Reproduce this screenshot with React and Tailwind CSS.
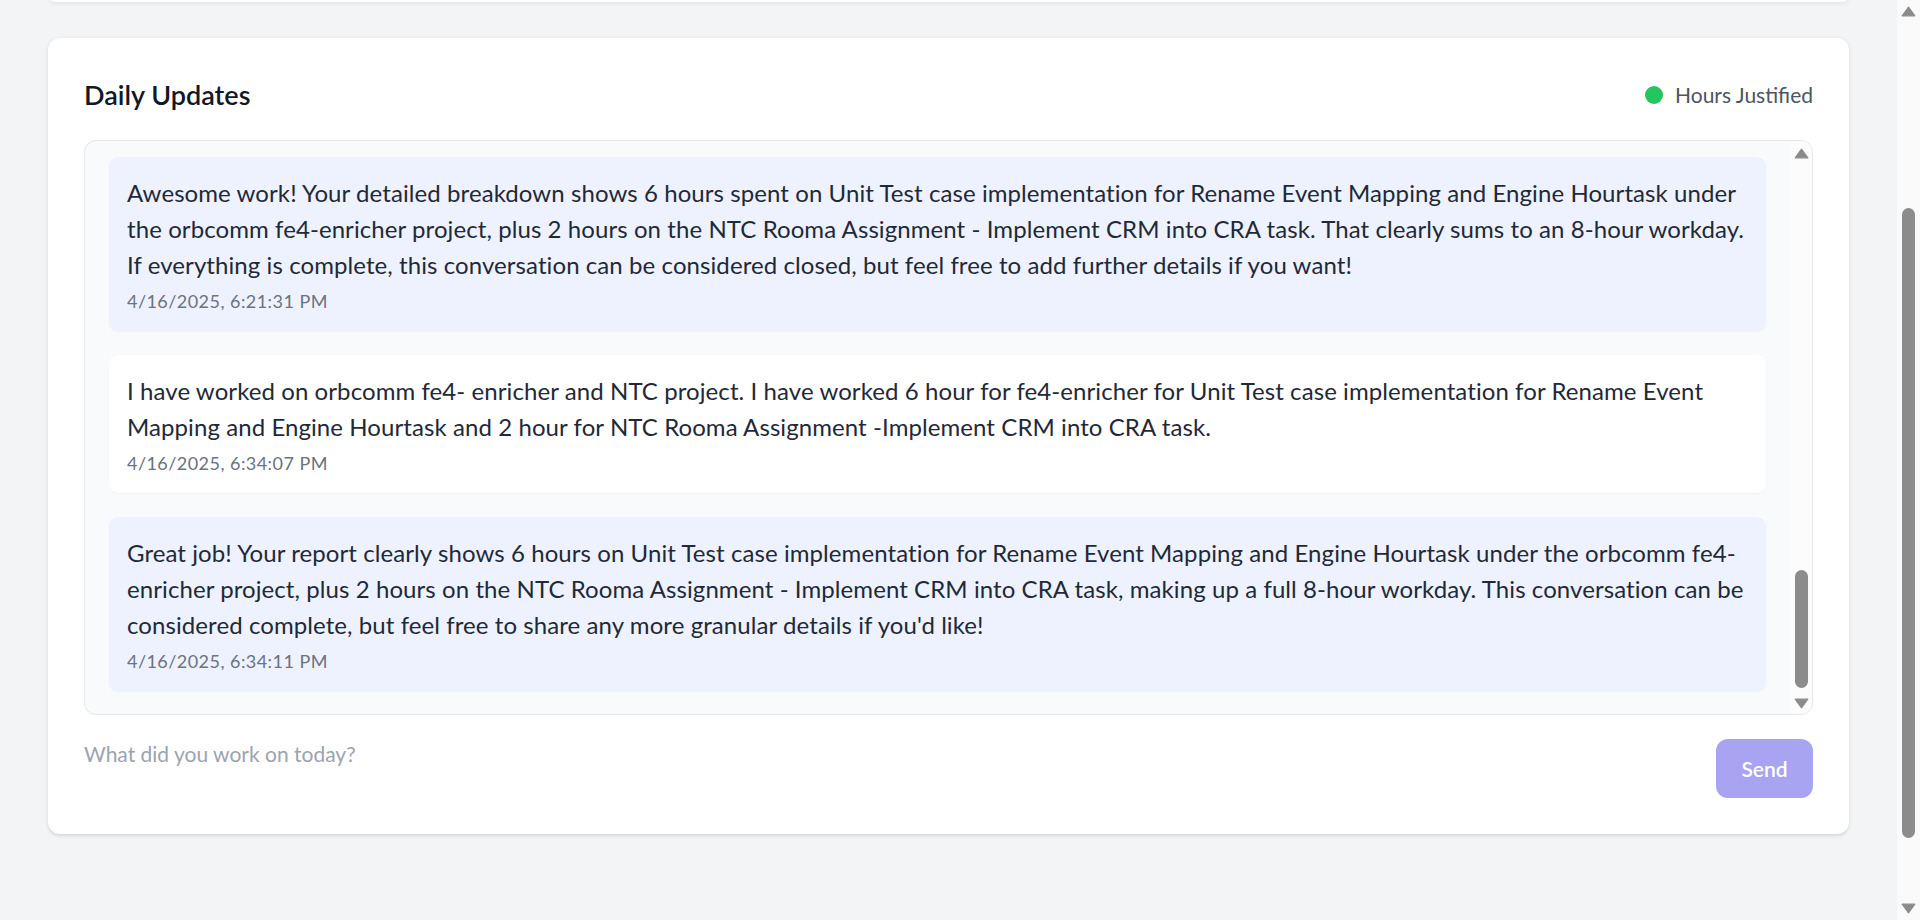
const messages = [
  {
    id: 1,
    role: 'assistant',
    text: 'Awesome work! Your detailed breakdown shows 6 hours spent on Unit Test case implementation for Rename Event Mapping and Engine Hourtask under the orbcomm fe4-enricher project, plus 2 hours on the NTC Rooma Assignment - Implement CRM into CRA task. That clearly sums to an 8-hour workday. If everything is complete, this conversation can be considered closed, but feel free to add further details if you want!',
    time: '4/16/2025, 6:21:31 PM',
  },
  {
    id: 2,
    role: 'user',
    text: 'I have worked on orbcomm fe4- enricher and NTC project. I have worked 6 hour for fe4-enricher for Unit Test case implementation for Rename Event Mapping and Engine Hourtask and 2 hour for NTC Rooma Assignment -Implement CRM into CRA task.',
    time: '4/16/2025, 6:34:07 PM',
  },
  {
    id: 3,
    role: 'assistant',
    text: "Great job! Your report clearly shows 6 hours on Unit Test case implementation for Rename Event Mapping and Engine Hourtask under the orbcomm fe4-enricher project, plus 2 hours on the NTC Rooma Assignment - Implement CRM into CRA task, making up a full 8-hour workday. This conversation can be considered complete, but feel free to share any more granular details if you'd like!",
    time: '4/16/2025, 6:34:11 PM',
  },
]

function Arrow({ down }) {
  return (
    <svg width="15" height="11" viewBox="0 0 15 11" className={down ? 'rotate-180' : ''}>
      <path d="M7.5 1.2 L13.8 9.8 H1.2 Z" fill="#8b8b8b" stroke="#8b8b8b" strokeWidth="1.2" strokeLinejoin="round" />
    </svg>
  )
}

function Message({ msg }) {
  const isUser = msg.role === 'user'
  return (
    <div
      className={`rounded-[9px] p-[18px] shadow-[0_1px_2px_rgba(0,0,0,0.04)] ${
        isUser ? 'bg-white' : 'bg-[#eef2ff]'
      }`}
    >
      <p className="text-[24px] leading-[36px] tracking-[0.08px] text-[#1f2937]">{msg.text}</p>
      <p className="mt-[6px] text-[18px] leading-[24px] tracking-[0.45px] text-[#6b7280]">{msg.time}</p>
    </div>
  )
}

export default function App() {
  return (
    <div
      className="flex h-[920px] w-full overflow-hidden bg-[#f3f4f6]"
      style={{ fontFamily: 'Lato, "Open Sans", sans-serif' }}
    >
      <main className="flex-1 flex flex-col px-[48px]">
        {/* bottom of the previous card, scrolled mostly out of view */}
        <div className="-mt-[12px] h-[14px] rounded-[12px] bg-white shadow-[0_1.5px_4px_rgba(0,0,0,0.08)]" />

        <section className="mt-[36px] rounded-[12px] bg-white px-[36px] pt-[36px] pb-[36px] shadow-[0_1.5px_4.5px_rgba(0,0,0,0.1),0_1.5px_3px_-1.5px_rgba(0,0,0,0.08)]">
          <div className="flex h-[42px] items-center justify-between">
            <h2 className="text-[27px] leading-[42px] font-semibold text-[#111827]">Daily Updates</h2>
            <div className="flex items-center gap-[12px]">
              <span className="h-[18px] w-[18px] rounded-full bg-[#22c55e]" />
              <span className="text-[21px] leading-[30px] text-[#4b5563]">Hours Justified</span>
            </div>
          </div>

          <div className="mt-[24px] flex h-[575px] overflow-hidden rounded-[12px] border border-[#e5e7eb] bg-[#f9fafb]">
            <div className="flex flex-1 flex-col gap-[24px] overflow-hidden px-[24px] pt-[16px]">
              {messages.map((m) => (
                <Message key={m.id} msg={m} />
              ))}
            </div>
            <div className="flex w-[22px] flex-col items-center bg-[#fcfcfd] pt-[7px] pb-[5px]">
              <Arrow />
              <div className="flex-1" />
              <div className="h-[118px] w-[13px] rounded-full bg-[#8c8c8c]" />
              <div className="mt-[10px]">
                <Arrow down />
              </div>
            </div>
          </div>

          <div className="mt-[24px] flex items-start gap-[18px]">
            <textarea
              rows={2}
              placeholder="What did you work on today?"
              className="h-[59px] flex-1 resize-none bg-transparent text-[21px] leading-[30px] text-[#1f2937] placeholder:text-[#9ca3af] focus:outline-none"
            />
            <button
              disabled
              className="flex h-[59px] w-[97px] items-center justify-center rounded-[12px] bg-[#a8a4f1] text-[21px] font-semibold text-white"
            >
              Send
            </button>
          </div>
        </section>
      </main>

      {/* window scrollbar */}
      <div className="flex w-[23px] flex-col items-center bg-[#fafafa] pt-[6px] pb-[6px]">
        <Arrow />
        <div className="mt-[191px] h-[630px] w-[13px] rounded-full bg-[#8c8c8c]" />
        <div className="flex-1" />
        <Arrow down />
      </div>
    </div>
  )
}
